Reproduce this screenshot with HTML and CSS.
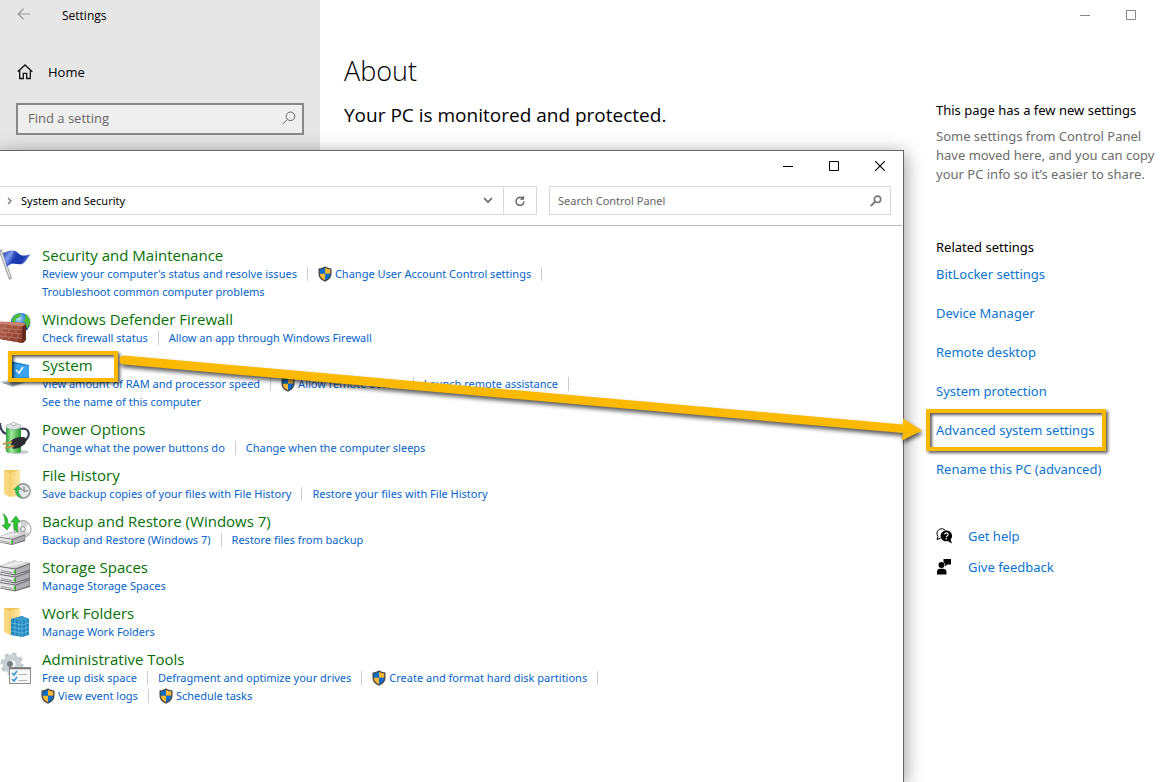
FILE: index.html
```html
<!DOCTYPE html>
<html lang="en">
<head>
<meta charset="utf-8">
<title>Settings</title>
<link rel="stylesheet" href="styles.css">
</head>
<body>
<svg class="defs" aria-hidden="true">
  <defs>
    <linearGradient id="blue" x1="0" y1="0" x2="1" y2=".4"><stop offset="0" stop-color="#16309c"/><stop offset=".3" stop-color="#7d9cf0"/><stop offset=".55" stop-color="#1f3dbb"/><stop offset=".8" stop-color="#1c38b0"/><stop offset="1" stop-color="#6d8cec"/></linearGradient>
    <linearGradient id="brick" x1="0" y1="0" x2="1" y2="1"><stop offset="0" stop-color="#b5644f"/><stop offset="1" stop-color="#843524"/></linearGradient>
    <radialGradient id="globe" cx=".4" cy=".3" r=".7"><stop offset="0" stop-color="#bfe8ff"/><stop offset=".5" stop-color="#2d83d8"/><stop offset="1" stop-color="#0b3f91"/></radialGradient>
    <linearGradient id="green" x1="0" x2="1"><stop offset="0" stop-color="#249c32"/><stop offset=".35" stop-color="#a5eb9e"/><stop offset="1" stop-color="#1d982b"/></linearGradient>
    <linearGradient id="metal" x1="0" y1="0" x2="1" y2="1"><stop offset="0" stop-color="#a8a8ac"/><stop offset=".45" stop-color="#f2f2f4"/><stop offset="1" stop-color="#9a9a9e"/></linearGradient>
    <linearGradient id="folder" x1="0" x2="1"><stop offset="0" stop-color="#f5ce6b"/><stop offset="1" stop-color="#ffe9a6"/></linearGradient>
    <symbol id="shield" viewBox="0 0 14 16">
      <path d="M7 .3C5 1.700 3 2.300.5 2.500v5C.5 11.500 3 14 7 15.700c4-1.700 6.500-4.200 6.500-8.200v-5C11 2.300 9 1.700 7 .3z" fill="#474747"/>
      <path d="M7 1.800v6H1.800V3.600C4 3.400 5.500 2.800 7 1.800z" fill="#0b6fd0"/>
      <path d="M7 1.800v6h5.200V3.600C10 3.400 8.500 2.800 7 1.800z" fill="#fcb934"/>
      <path d="M1.800 7.800H7v6.500C3.700 12.800 1.900 10.800 1.800 7.800z" fill="#fcb934"/>
      <path d="M12.200 7.800H7v6.500c3.300-1.500 5.100-3.500 5.200-6.500z" fill="#0b6fd0"/>
    </symbol>
    <symbol id="drive" viewBox="0 0 31 16">
      <path d="M0 6 14 .5 30 3v8L15 15.500 0 12.500z" fill="#707074"/>
      <path d="M0 6 14 .5 30 3 15.500 8.500z" fill="url(#metal)"/>
      <path d="M0 7l15 2.500v4.800L0 11.800z" fill="#e6e6e9"/>
      <path d="M16 9.500 29.500 4.500v5L16 14.300z" fill="#aeaeb3"/>
      <path d="M1 10.500 12 12.500" stroke="#98989c"/><path d="M13.500 10.500l2 .3v3l-2-.3z" fill="#2fcf1f"/>
    </symbol>
  </defs>
</svg>

<div class="settings">
  <aside class="sidebar">
    <header class="sidebar-title">
      <button class="back" aria-label="Back"><svg width="14" height="12" viewBox="0 0 14 12"><path d="M13 6H1.500M6.500.8 1.200 6l5.300 5.200" fill="none" stroke="#999" stroke-width="1.200"/></svg></button>
      <span>Settings</span>
    </header>
    <a class="home" href="#">
      <svg width="16" height="16" viewBox="0 0 16 16"><path d="M.7 7.800 8 1l7.300 6.800M2.700 6.200v8.300h3.600V9.300h3.400v5.200h3.600V6.200" fill="none" stroke="#111" stroke-width="1.300"/></svg>
      <span>Home</span>
    </a>
    <div class="find">
      <input type="text" placeholder="Find a setting" aria-label="Find a setting">
      <svg width="14" height="14" viewBox="0 0 14 14"><circle cx="8.500" cy="5.300" r="4.300" fill="none" stroke="#666"/><path d="M5.400 8.400.8 13" stroke="#666"/></svg>
    </div>
  </aside>

  <div class="content">
    <div class="window-buttons">
      <button aria-label="Minimize"><svg width="10" height="10" viewBox="0 0 10 10"><path d="M0 5.500h10" stroke="#888"/></svg></button>
      <button aria-label="Maximize"><svg width="10" height="10" viewBox="0 0 10 10"><path d="M.5.500h9v9h-9z" fill="none" stroke="#888"/></svg></button>
    </div>
    <div class="columns">
      <main class="about">
        <h1>About</h1>
        <h2>Your PC is monitored and protected.</h2>
      </main>
      <aside class="related">
        <h3>This page has a few new settings</h3>
        <p>Some settings from Control Panel have moved here, and you can copy your PC info so it’s easier to share.</p>
        <h3>Related settings</h3>
        <ul class="related-links">
          <li><a href="#">BitLocker settings</a></li>
          <li><a href="#">Device Manager</a></li>
          <li><a href="#">Remote desktop</a></li>
          <li><a href="#">System protection</a></li>
          <li class="marked"><a href="#">Advanced system settings</a><span class="callout callout-advanced"></span></li>
          <li><a href="#">Rename this PC (advanced)</a></li>
        </ul>
        <ul class="help-links">
          <li>
            <svg width="16" height="16" viewBox="0 0 16 16"><path d="M4.800 10 1 11.500l1-3A4.600 4.600 0 1 1 9.400 2.500" fill="none" stroke="#000"/><path d="M10.300 2.500a5.400 5.400 0 1 0 1.400 10.500L16 15.500l-1.400-4A5.400 5.400 0 0 0 10.300 2.500z"/><path d="M8.700 6.400c.2-2 3.500-1.900 3.400.1 0 1.400-1.700 1.200-1.700 2.700M10.400 10.300v1.200" fill="none" stroke="#fff" stroke-width="1.200"/></svg>
            <a href="#">Get help</a>
          </li>
          <li>
            <svg width="16" height="16" viewBox="0 0 16 16"><circle cx="5.500" cy="6" r="3"/><path d="M1 15.500V13c0-2 1.500-3.200 3-3.200h3c2 0 3.500 1.200 3.500 3.200v2.500zM7.500 0H15v5.500h-3.500L9.300 7.500V5.200L7.500 3z"/></svg>
            <a href="#">Give feedback</a>
          </li>
        </ul>
      </aside>
    </div>
  </div>
</div>

<section class="panel" aria-label="System and Security">
  <header class="panel-title">
    <button aria-label="Minimize"><svg width="10" height="10" viewBox="0 0 10 10"><path d="M0 5.500h10" stroke="#000"/></svg></button>
    <button aria-label="Maximize"><svg width="10" height="10" viewBox="0 0 10 10"><path d="M.5.500h9v9h-9z" fill="none" stroke="#000"/></svg></button>
    <button aria-label="Close"><svg width="10" height="10" viewBox="0 0 10 10"><path d="M0 0l10 10M10 0 0 10" stroke="#000" stroke-width="1.200"/></svg></button>
  </header>
  <div class="toolbar">
    <div class="address">
      <svg width="5" height="8" viewBox="0 0 5 8"><path d="M1 1l3 3-3 3" fill="none" stroke="#777" stroke-width="1.300"/></svg>
      <span class="crumb">System and Security</span>
      <button class="drop" aria-label="Previous locations"><svg width="10" height="7" viewBox="0 0 10 7"><path d="M1 1l4 4 4-4" fill="none" stroke="#666" stroke-width="1.700"/></svg></button>
      <button class="refresh" aria-label="Refresh"><svg width="12" height="12" viewBox="0 0 12 12"><path d="M8.600 3.300A4 4 0 1 0 10 6.500" fill="none" stroke="#666" stroke-width="1.500"/><path d="M10 .5v4.200H5.800z" fill="#666"/></svg></button>
    </div>
    <div class="search">
      <input type="text" placeholder="Search Control Panel" aria-label="Search Control Panel">
      <svg width="12" height="12" viewBox="0 0 12 12"><circle cx="7.500" cy="4.300" r="3.200" fill="none" stroke="#777" stroke-width="1.600"/><path d="M5.200 6.600.8 11" stroke="#777" stroke-width="1.900"/></svg>
    </div>
  </div>

  <div class="categories">
    <article class="category">
      <svg class="icon" viewBox="0 0 34 34"><path d="M-1 3h2.500l10 28-2 1.500z" fill="#b9b9b9" stroke="#8a8a8a" stroke-width=".7"/><path d="M1 5l9 25" stroke="#f4f4f4"/><path d="M3 6c4-1 5-2.500 9-2.500 5 0 7 5 11 5 3 0 5-.5 8-1.500-3 2-5 9-9 10-5 1-9-1.500-11 0-2 1-3 2-4.500 2.500z" fill="url(#blue)"/><path d="M14 3.500c3 .5 4 3 6 4.300l-2 9.500c-3-.5-5-1.300-7-.3z" fill="#1c38ae" opacity=".6"/></svg>
      <div><h3><a href="#">Security and Maintenance</a></h3>
        <ul><li><a href="#">Review your computer's status and resolve issues</a></li><li><svg class="shield"><use href="#shield"/></svg><a href="#">Change User Account Control settings</a></li></ul>
        <ul class="last"><li><a href="#">Troubleshoot common computer problems</a></li></ul></div>
    </article>
    <article class="category">
      <svg class="icon" viewBox="0 0 34 34"><circle cx="20.500" cy="11.500" r="9.800" fill="url(#globe)"/><path d="M12 8c2-4 6-6 9-5l-1 3-4 2-1 4-3 1zM25 3c4 2 6 5 5 10l-3 5-1-5-3-3 2-2z" fill="#4fb93a"/><path d="M0 11 23 12 26 14v15l-3 3-23-4z" fill="#69291d"/><path d="M0 13l22 2v17L0 28z" fill="url(#brick)"/><path d="M0 10.500 22 11.500l4 2-4 2L0 13z" fill="#c98270"/><path d="M0 17l22 2M0 21l22 2M0 25l22 2.500M5 13.500v4M12 14v4M18 15v3.500M2 17v4M9 18v4M16 18.500v4M5 21.500v4M12 22v4M18 23v4M2 25v3.500M9 26v3.500M16 27v4" stroke="#c78f7f" stroke-width=".6"/></svg>
      <div><h3><a href="#">Windows Defender Firewall</a></h3>
        <ul class="last"><li><a href="#">Check firewall status</a></li><li><a href="#">Allow an app through Windows Firewall</a></li></ul></div>
    </article>
    <article class="category marked">
      <svg class="icon" viewBox="0 0 34 34"><path d="M0 25l13-3 12 4-12 4z" fill="#c6c9cb"/><path d="M2 26l11-2 9 2-9 3z" fill="#92979b"/><path d="M10 4l19 4v13l-19 2z" fill="#2583d3"/><path d="M12 7l17 2v11l-17 1z" fill="#38a3ee"/><path d="M16 13l3 3 4-6" fill="none" stroke="#fff" stroke-width="1.500"/></svg>
      <div><h3><a href="#">System</a></h3>
        <ul><li><a href="#">View amount of RAM and processor speed</a></li><li><svg class="shield"><use href="#shield"/></svg><a href="#">Allow remote access</a></li><li><a href="#">Launch remote assistance</a></li></ul>
        <ul class="last"><li><a href="#">See the name of this computer</a></li></ul></div>
      <span class="callout callout-system"></span>
    </article>
    <article class="category">
      <svg class="icon" viewBox="0 0 34 34"><ellipse cx="18" cy="31" rx="11" ry="2" fill="#c8cdd0"/><path d="M6 13C2 11 0 8 0 2M21 8c8-2 11 7 3 12" fill="none" stroke="#3b3f58" stroke-width="2.200"/><rect x="6" y="4" width="15" height="28" rx="3" fill="url(#green)"/><ellipse cx="13.500" cy="5.500" rx="7.500" ry="3" fill="#dde2e4" stroke="#9aa1a5" stroke-width=".7"/><rect x="11" y="1.500" width="5" height="3" rx="1.500" fill="#f3f3f3" stroke="#999" stroke-width=".6"/><path d="M10 21c3-4 7-5 14-5l3 2-2 5-6 4-6 1z" fill="#2d2c32"/><path d="M3 23l9-2M5 27l9-2" stroke="#c4964d" stroke-width="1.800"/></svg>
      <div><h3><a href="#">Power Options</a></h3>
        <ul class="last"><li><a href="#">Change what the power buttons do</a></li><li><a href="#">Change when the computer sleeps</a></li></ul></div>
    </article>
    <article class="category">
      <svg class="icon" viewBox="0 0 34 34"><path d="M4 3h16v26H9z" fill="#f1c65d"/><path d="M4 3l6 4v23l-6-3z" fill="#f8d77f"/><path d="M9 6l11-3v26l-11 1z" fill="url(#folder)"/><circle cx="23" cy="24" r="7.200" fill="#e4e6e8" stroke="#8b8f91" stroke-width="1.400"/><path d="M24 19.500v5l4-1M20 20.500l4 4" fill="none" stroke="#666" stroke-width=".9"/><path d="M13 23l5-5 3 5h-2.500c0 3 2 6 4.500 8-5-1-8-4-7.500-8z" fill="#35b54d"/></svg>
      <div><h3><a href="#">File History</a></h3>
        <ul class="last"><li><a href="#">Save backup copies of your files with File History</a></li><li><a href="#">Restore your files with File History</a></li></ul></div>
    </article>
    <article class="category">
      <svg class="icon" viewBox="0 0 34 34"><circle cx="22.500" cy="16" r="8.500" fill="#d2d2d6" stroke="#98989c"/><path d="M22 16l7-5c2 3 2 7 0 9zM22 16l-6-5 4-3z" fill="#f8f8f8"/><circle cx="23" cy="16" r="2.300" fill="#fff" stroke="#888"/><svg x="-1" y="18" width="27" height="15"><use href="#drive"/></svg><path d="M3 1c4 2 5 6 5 10h3l-4 6-5-5h3C5 7 5 4 3 1z" fill="#2fc432" stroke="#11891a" stroke-width=".6"/><path d="M18 19c-4-2-5-5-4-10h-3l5-6 4 6h-2c-1 4-1 7 0 10z" fill="#2fc432" stroke="#11891a" stroke-width=".6"/></svg>
      <div><h3><a href="#">Backup and Restore (Windows 7)</a></h3>
        <ul class="last"><li><a href="#">Backup and Restore (Windows 7)</a></li><li><a href="#">Restore files from backup</a></li></ul></div>
    </article>
    <article class="category">
      <svg class="icon" viewBox="0 0 34 34"><svg x="0" y="17" width="31" height="16"><use href="#drive"/></svg><svg x="0" y="9" width="31" height="16"><use href="#drive"/></svg><svg x="0" y="1" width="31" height="16"><use href="#drive"/></svg></svg>
      <div><h3><a href="#">Storage Spaces</a></h3>
        <ul class="last"><li><a href="#">Manage Storage Spaces</a></li></ul></div>
    </article>
    <article class="category">
      <svg class="icon" viewBox="0 0 34 34"><path d="M4 3h16v26H9z" fill="#f1c65d"/><path d="M4 3l6 4v23l-6-3z" fill="#f8d77f"/><path d="M9 6l11-3v26l-11 1z" fill="url(#folder)"/><path d="M11 14l11-3 7 3v16l-7 2-11-2z" fill="#2287bf"/><path d="M11 14l11-3 7 3-7 2z" fill="#3d9dcc"/><path d="M11 18l11 2 7-2M11 22l11 2 7-2M11 26l11 2 7-2M15 15v15M19 16v15M22 16v16M26 15v15" stroke="#6fc0e4" stroke-width=".7" fill="none"/></svg>
      <div><h3><a href="#">Work Folders</a></h3>
        <ul class="last"><li><a href="#">Manage Work Folders</a></li></ul></div>
    </article>
    <article class="category">
      <svg class="icon" viewBox="0 0 34 34"><circle cx="12" cy="13" r="9.500" fill="none" stroke="#bcc5ca" stroke-width="4" stroke-dasharray="4 3.460"/><circle cx="12" cy="13" r="6.500" fill="none" stroke="#c8d0d4" stroke-width="6"/><circle cx="10" cy="13" r="3" fill="#777f84"/><rect x="9.500" y="16.500" width="21" height="16" fill="#f7f7f7" stroke="#8d8d8d"/><path d="M9 17.500h22" stroke="#777" stroke-width="1.500"/><path d="M12 22l2 2 3-4M12 28l2 2 3-4" fill="none" stroke="#3c96db" stroke-width="1.600"/><path d="M18.500 23.500H27M18.500 29.500H27" stroke="#b6b6b6"/></svg>
      <div><h3><a href="#">Administrative Tools</a></h3>
        <ul><li><a href="#">Free up disk space</a></li><li><a href="#">Defragment and optimize your drives</a></li><li><svg class="shield"><use href="#shield"/></svg><a href="#">Create and format hard disk partitions</a></li></ul>
        <ul class="last"><li><svg class="shield"><use href="#shield"/></svg><a href="#">View event logs</a></li><li><svg class="shield"><use href="#shield"/></svg><a href="#">Schedule tasks</a></li></ul></div>
    </article>
  </div>
</section>

<svg class="arrow" viewBox="0 0 816 100" preserveAspectRatio="none" aria-hidden="true"><path d="M6 5.500a4.500 4.500 0 0 0 0 9L785 83 784 90.500 804 80.500 785 68.500v6z" fill="#fbb900"/></svg>
</body>
</html>
```
FILE: styles.css
```css
* { box-sizing: border-box; }

body {
  position: relative;
  margin: 0;
  height: 100vh;
  overflow: hidden;
  background: #fff;
  color: #000;
  font-family: "Open Sans", "Noto Sans", sans-serif;
  font-size: 13px;
}

h1, h2, h3, p, ul { margin: 0; padding: 0; font-weight: 400; }
ul { list-style: none; }
a { text-decoration: none; }
svg { display: block; flex: none; }
input { min-width: 0; padding: 0; border: 0; outline: 0; background: none; font: inherit; }
button {
  display: flex;
  align-items: center;
  justify-content: center;
  padding: 0;
  border: 0;
  background: none;
}
.defs { position: absolute; width: 0; height: 0; }

/* Settings window */
.settings { display: flex; min-height: 100%; }

.sidebar { flex: none; width: 320px; padding: 0 16px; background: #e6e6e6; }
.sidebar-title { display: flex; align-items: center; gap: 30px; height: 30px; font-size: 12px; }
.back { width: 16px; height: 28px; align-self: flex-start; }
.home {
  display: flex;
  align-items: center;
  gap: 15px;
  height: 30px;
  margin: 27px 0 16px;
  padding-left: 1px;
  color: #000;
}
.find {
  display: flex;
  align-items: center;
  height: 32px;
  padding: 0 6px 2px 10px;
  border: 2px solid #888;
  background: #efefef;
}
.find input { flex: 1; }
.find input::placeholder { color: #666; opacity: 1; }

.content { flex: 1; min-width: 0; }
.window-buttons { display: flex; justify-content: flex-end; height: 30px; padding-right: 9px; }
.window-buttons button { width: 46px; }
.columns { display: flex; }
.about { flex: 1; padding: 19px 24px; }
.about h1 { font-size: 27px; font-weight: 300; line-height: 44px; }
.about h2 { font-size: 19px; line-height: 44px; }

.related { flex: none; width: 227px; padding-top: 70px; font-family: "Noto Sans", "Open Sans", sans-serif; line-height: 20px; }
.related h3 { font-size: 13px; }
.related p { margin: 7px 0 53px; color: #6d6d6d; line-height: 19px; }
.related a { color: #0a74cf; }
.related-links { display: grid; gap: 19px; margin-top: 7px; }
.help-links { display: grid; gap: 11px; margin-top: 47px; }
.help-links li { display: flex; align-items: center; gap: 16px; }
.marked { position: relative; }

/* Control panel window */
.panel {
  position: absolute;
  top: 150px;
  right: 259px;
  bottom: 0;
  left: 0;
  border: solid #666;
  border-width: 1px 1px 0 0;
  background: #fff;
  box-shadow: 0 4px 18px rgba(0, 0, 0, .45);
  font-family: "Noto Sans", "Open Sans", sans-serif;
  font-size: 11px;
}
.panel-title { display: flex; justify-content: flex-end; height: 35px; padding-bottom: 6px; }
.panel-title button { width: 46px; }

.toolbar { display: flex; gap: 12px; height: 40px; padding: 0 11px 10px 0; border-bottom: 1px solid #bcbcbc; margin-right: 1px; }
.address, .search { display: flex; align-items: stretch; border: 1px solid #d9d9d9; }
.address { flex: 1; align-items: center; border-left: 0; padding-left: 7px; gap: 9px; }
.crumb { flex: 1; }
.address button { align-self: stretch; width: 33px; }
.address .drop { width: 12px; }
.address .refresh { border-left: 1px solid #d9d9d9; }
.search { width: 342px; align-items: center; padding: 0 8px; }
.search input { flex: 1; }
.search input::placeholder { color: #666; opacity: 1; }

.categories { padding-top: 20px; }
.category { display: flex; gap: 8px; margin-bottom: 9px; line-height: 18px; }
.category .icon { width: 34px; height: 34px; margin-top: 1px; }
.category h3 { margin-bottom: 1px; font-family: "Open Sans", "Noto Sans", sans-serif; font-size: 15px; line-height: 18px; }
.category h3 a { color: #067006; }
.category ul { display: flex; }
.category li { display: flex; align-items: center; white-space: nowrap; }
.category li::after { content: ""; width: 1px; height: 14px; margin: 0 10px; background: #ccc; }
.category .last li:last-child::after { content: none; }
.category li a { color: #0563c9; }
.shield { width: 14px; height: 16px; margin-right: 3px; }
.category li:first-child .shield { margin-left: -1px; }

/* Highlights */
.callout {
  position: absolute;
  border: 4px solid #fbb900;
  box-shadow: 2px 2px 3px rgba(0, 0, 0, .65), inset 2px 2px 3px rgba(0, 0, 0, .65);
  pointer-events: none;
}
.callout-system { top: -5px; left: 8px; width: 110px; height: 31px; }
.callout-advanced { top: -11px; left: -10px; width: 180px; height: 42px; }
.arrow {
  position: absolute;
  top: 350px;
  right: 229px;
  left: 118px;
  width: calc(100% - 347px);
  height: 100px;
  filter: drop-shadow(1px 3px 2px rgba(0, 0, 0, .65));
  pointer-events: none;
}
```
